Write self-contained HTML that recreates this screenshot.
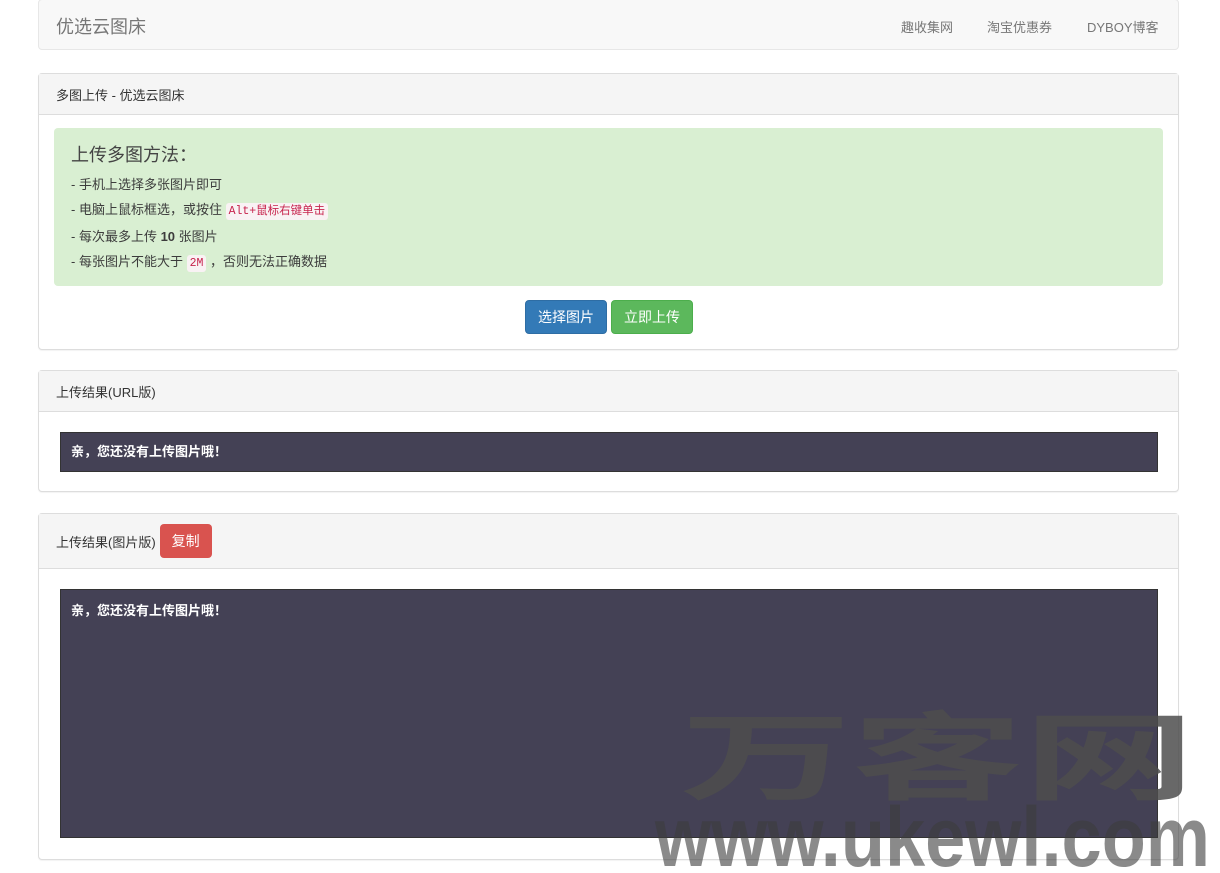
<!DOCTYPE html>
<html><head><meta charset="utf-8"><style>
*{box-sizing:border-box;margin:0;padding:0}
body{width:1220px;height:873px;background:#fff;font-family:"Liberation Sans","Noto Sans CJK SC",sans-serif;font-size:13px;color:#333;position:relative;overflow:hidden}
.nav{position:absolute;left:38px;top:-1px;width:1141px;height:51px;background:#f8f8f8;border:1px solid #e7e7e7;border-radius:4px}
.brand{position:absolute;left:17px;top:13px;font-size:18px;color:#777}
.nav a{position:absolute;top:17px;font-size:13px;color:#777;text-decoration:none}
.panel{position:absolute;left:38px;width:1141px;border:1px solid #ddd;border-radius:4px;background:#fff;box-shadow:0 1px 1px rgba(0,0,0,.05)}
.ph{background:#f5f5f5;border-bottom:1px solid #ddd;padding:0 17px;font-size:13px;color:#333;display:flex;align-items:center}
.alert{position:absolute;left:15px;top:54px;width:1109px;height:158px;background:#d9efd2;border-radius:4px;padding:13px 17px;color:#3c3c3c}
.alert h4{font-size:18px;font-weight:normal;color:#444;margin-bottom:5px}
.alert p{line-height:25px;font-size:13px}
code{font-family:"Liberation Mono","Noto Sans CJK SC",monospace;font-size:11.5px;color:#c7254e;background:#f9f2f4;padding:2px 3px;border-radius:3px}
.btn{position:absolute;top:226px;height:34px;border-radius:4px;color:#fff;font-size:14px;line-height:32px;text-align:center}
.dark{position:absolute;left:21px;width:1098px;background:#444155;color:#fff;font-weight:bold;font-size:13px;padding:0 10px;border:1px solid #333}
</style></head><body>
<div class="nav"><span class="brand">优选云图床</span>
<a style="left:862px">趣收集网</a><a style="left:948px">淘宝优惠券</a><a style="left:1048px">DYBOY博客</a></div>

<div class="panel" style="top:73px;height:277px">
<div class="ph" style="height:41px">多图上传 - 优选云图床</div>
<div class="alert"><h4>上传多图方法：</h4>
<p>- 手机上选择多张图片即可</p>
<p>- 电脑上鼠标框选，或按住 <code>Alt+鼠标右键单击</code></p>
<p>- 每次最多上传 <b>10</b> 张图片</p>
<p>- 每张图片不能大于 <code>2M</code> ，否则无法正确数据</p></div>
<div class="btn" style="left:486px;width:82px;background:#337ab7;border:1px solid #2e6da4">选择图片</div>
<div class="btn" style="left:572px;width:82px;background:#5cb85c;border:1px solid #4cae4c">立即上传</div>
</div>

<div class="panel" style="top:370px;height:122px">
<div class="ph" style="height:41px">上传结果(URL版)</div>
<div class="dark" style="top:61px;height:40px;line-height:38px">亲，您还没有上传图片哦！</div>
</div>

<div class="panel" style="top:513px;height:347px">
<div class="ph" style="height:55px">上传结果(图片版) <span style="margin-left:4px;background:#d9534f;color:#fff;border-radius:4px;padding:0 12px;height:34px;line-height:34px;font-size:14px">复制</span></div>
<div class="dark" style="top:75px;height:249px;padding-top:10px">亲，您还没有上传图片哦！</div>
</div>

<svg style="position:absolute;left:0;top:0" width="1220" height="873">
<text x="680" y="792" textLength="515" lengthAdjust="spacingAndGlyphs" font-family="Liberation Sans, Noto Sans CJK SC, sans-serif" font-weight="bold" font-size="96" fill="#4e4e4e" fill-opacity="0.85">万客网</text>
<text x="655" y="866" textLength="555" lengthAdjust="spacingAndGlyphs" font-family="Liberation Sans, sans-serif" font-weight="bold" font-size="84" fill="#3c3c3c" fill-opacity="0.6">www.ukewl.com</text>
</svg>
</body></html>
